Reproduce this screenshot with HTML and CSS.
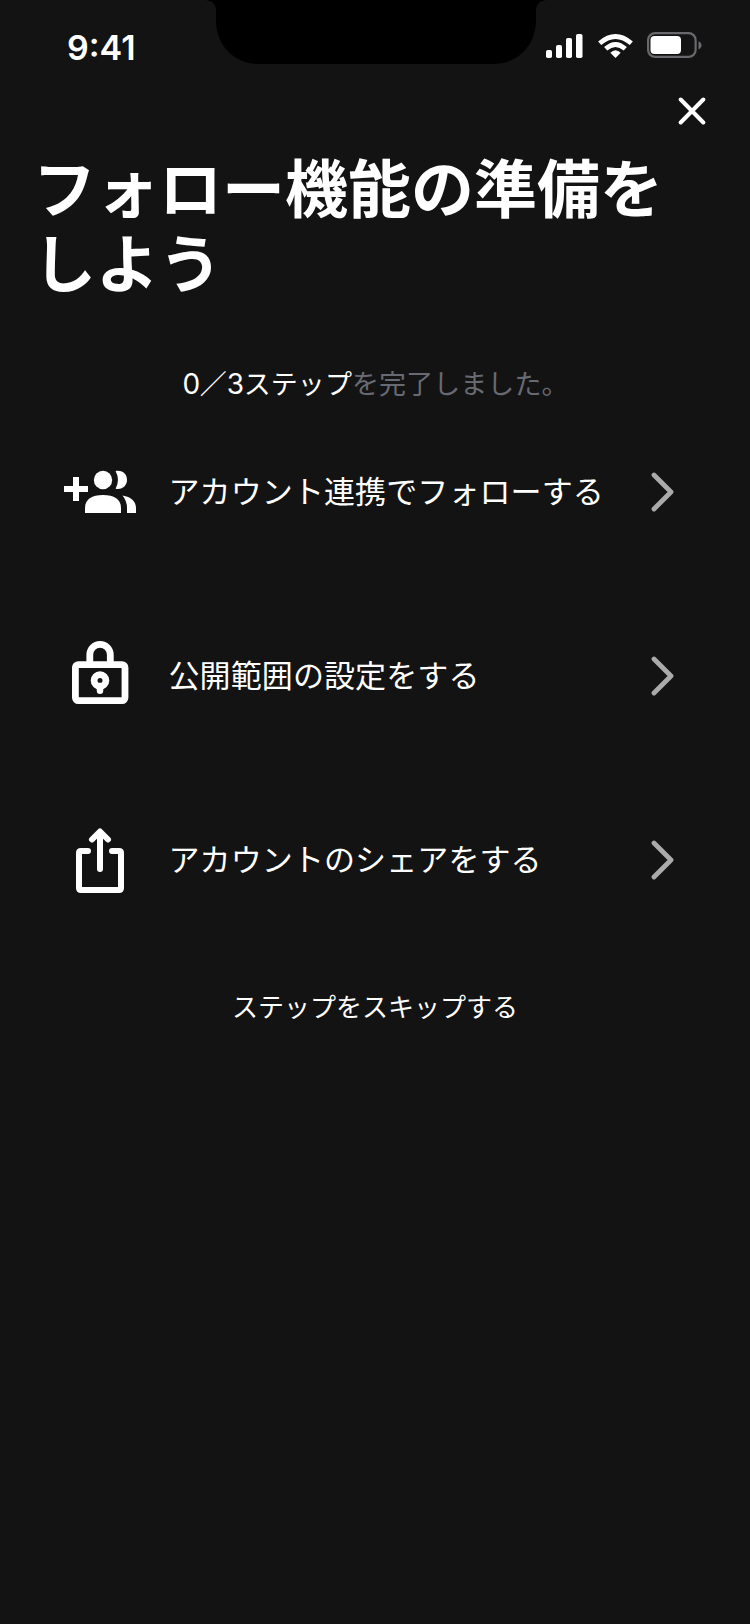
FILE: index.html
```html
<!DOCTYPE html>
<html lang="ja">
<head>
<meta charset="utf-8">
<title>フォロー機能の準備をしよう</title>
<link rel="stylesheet" href="styles.css">
</head>
<body>
<div class="screen">
  <header class="status">
    <span class="time">9:41</span>
    <svg class="notch" width="334" height="64" viewBox="0 0 334 64" fill="#000"><path d="M-3 0H337Q328 1 327 9V20C327 46 308 64 284 64H50C26 64 7 46 7 20V9Q6 1 -3 0Z"/></svg>
    <svg class="indicators" width="158" height="28" viewBox="0 0 158 28">
      <g fill="#fff">
        <rect x="0" y="18" width="6" height="8" rx="1.8"/>
        <rect x="10" y="13" width="6" height="13" rx="1.8"/>
        <rect x="20" y="6" width="6" height="20" rx="1.8"/>
        <rect x="30" y="2" width="6.5" height="24" rx="1.8"/>
        <path d="M64.3 20.800Q69.500 15.800 74.700 20.800L69.500 26Z"/>
      </g>
      <g fill="none" stroke="#fff" stroke-width="4.800">
        <path d="M53.700 11.200Q69.500-2.400 85.300 11.200"/>
        <path d="M59.700 16.800Q69.500 8.000 79.300 16.800"/>
      </g>
      <rect x="102.100" y="1.100" width="47.500" height="23.800" rx="7" fill="none" stroke="#68696c" stroke-width="2.200"/>
      <rect x="104.500" y="4" width="30.500" height="18" rx="4" fill="#fff"/>
      <path d="M152.500 9.200C156.600 11 156.600 15.500 152.500 17.400Z" fill="#68696c"/>
    </svg>
  </header>
  <div class="toolbar">
    <button class="close" aria-label="閉じる"><svg width="28" height="28" viewBox="0 0 28 28" fill="none" stroke="#fff" stroke-width="4" stroke-linecap="round"><path d="M2.700 2.500L25.300 25.500M25.300 2.500L2.700 25.500"/></svg></button>
  </div>
  <main>
    <h1 class="title">フォロー機能の準備を<br>しよう</h1>
    <p class="progress"><span class="done"><span class="digit">0</span>／<span class="digit">3</span>ステップ</span>を完了しました。</p>
    <ul class="steps">
      <li class="step">
        <svg class="icon" width="80" height="80" viewBox="0 0 80 80" fill="#fff">
          <path d="M13 25H19V34H28V40H19V49H13V40H4V34H13Z"/>
          <circle cx="43" cy="28" r="9.200"/>
          <path d="M55.600 18.900C64 18 67 23 67 28S63 38 55.600 36.800Q60.300 28 55.600 18.900Z"/>
          <path d="M25 61V56C25 47 32 43 43 43S61 47 61 56V61Z"/>
          <path d="M62.500 43.600C71 45 76 49.500 76 56V61H67V56Q67 49 62.500 43.600Z"/>
        </svg>
        <span class="label">アカウント連携でフォローする</span>
        <svg class="chevron" width="24" height="40" viewBox="0 0 24 40"><path d="M3 3L20 20L3 37"/></svg>
      </li>
      <li class="step">
        <svg class="icon" width="80" height="80" viewBox="0 0 80 80" fill="none" stroke="#fff" stroke-width="6.800">
          <rect x="15.400" y="28.600" width="49.600" height="36" rx="3"/>
          <path d="M29.800 29V18.700A10.250 10.250 0 0 1 50.300 18.700V29"/>
          <circle cx="40" cy="44.500" r="5.900"/>
          <path d="M40 50V54.700" stroke-linecap="round" stroke-width="6.500"/>
        </svg>
        <span class="label">公開範囲の設定をする</span>
        <svg class="chevron" width="24" height="40" viewBox="0 0 24 40"><path d="M3 3L20 20L3 37"/></svg>
      </li>
      <li class="step">
        <svg class="icon" width="80" height="80" viewBox="0 0 80 80" fill="none" stroke="#fff" stroke-width="6" stroke-linecap="round" stroke-linejoin="round">
          <path d="M28 31H21Q19 31 19 33V68Q19 70 21 70H59Q61 70 61 68V33Q61 31 59 31H52"/>
          <path d="M40 49V13M32 19.500L40 11.500L48 19.500"/>
        </svg>
        <span class="label">アカウントのシェアをする</span>
        <svg class="chevron" width="24" height="40" viewBox="0 0 24 40"><path d="M3 3L20 20L3 37"/></svg>
      </li>
    </ul>
    <a class="skip">ステップをスキップする</a>
  </main>
</div>
</body>
</html>
```
FILE: styles.css
```css
* { box-sizing: border-box; }
body { margin: 0; background: #131313; color: #fff; font-family: Inter, "Noto Sans CJK JP", sans-serif; }
.screen { width: 750px; height: 1624px; overflow: hidden; background: #131313; }
.status { display: flex; height: 88px; align-items: flex-start; }
.time { width: 209px; padding: 27px 0 0 67px; font-size: 34px; line-height: 42px; font-weight: 600; }
.notch { flex: none; overflow: visible; }
.indicators { flex: none; margin: 32px 0 0 3px; }
.toolbar { display: flex; justify-content: flex-end; height: 64px; padding: 9px 44px 0 0; }
.close { width: 28px; height: 28px; padding: 0; border: 0; background: none; }
.close svg { display: block; }
main { display: flex; flex-direction: column; }
.title { margin: 0; padding-left: 33px; font-size: 63px; line-height: 75px; font-weight: 700; white-space: nowrap; }
.progress { margin: 63px 0 0; padding-left: 1px; text-align: center; font-size: 27px; line-height: 40px; letter-spacing: 0.08px; color: #686a73; }
.done { color: #fff; }
.digit { font-size: 28px; line-height: 1; letter-spacing: -0.4px; }
.steps { display: flex; flex-direction: column; gap: 104px; margin: 47px 0 0; padding: 0 75px 0 60px; list-style: none; }
.step { display: flex; align-items: center; height: 80px; }
.icon { flex: none; }
.label { flex: 1; padding-left: 28.5px; font-size: 31px; line-height: 48px; letter-spacing: 0.1px; white-space: nowrap; }
.chevron { flex: none; fill: none; stroke: #aaa; stroke-width: 4.800; stroke-linecap: round; stroke-linejoin: round; }
.skip { align-self: center; margin-top: 88px; font-size: 26px; line-height: 40px; }
```
